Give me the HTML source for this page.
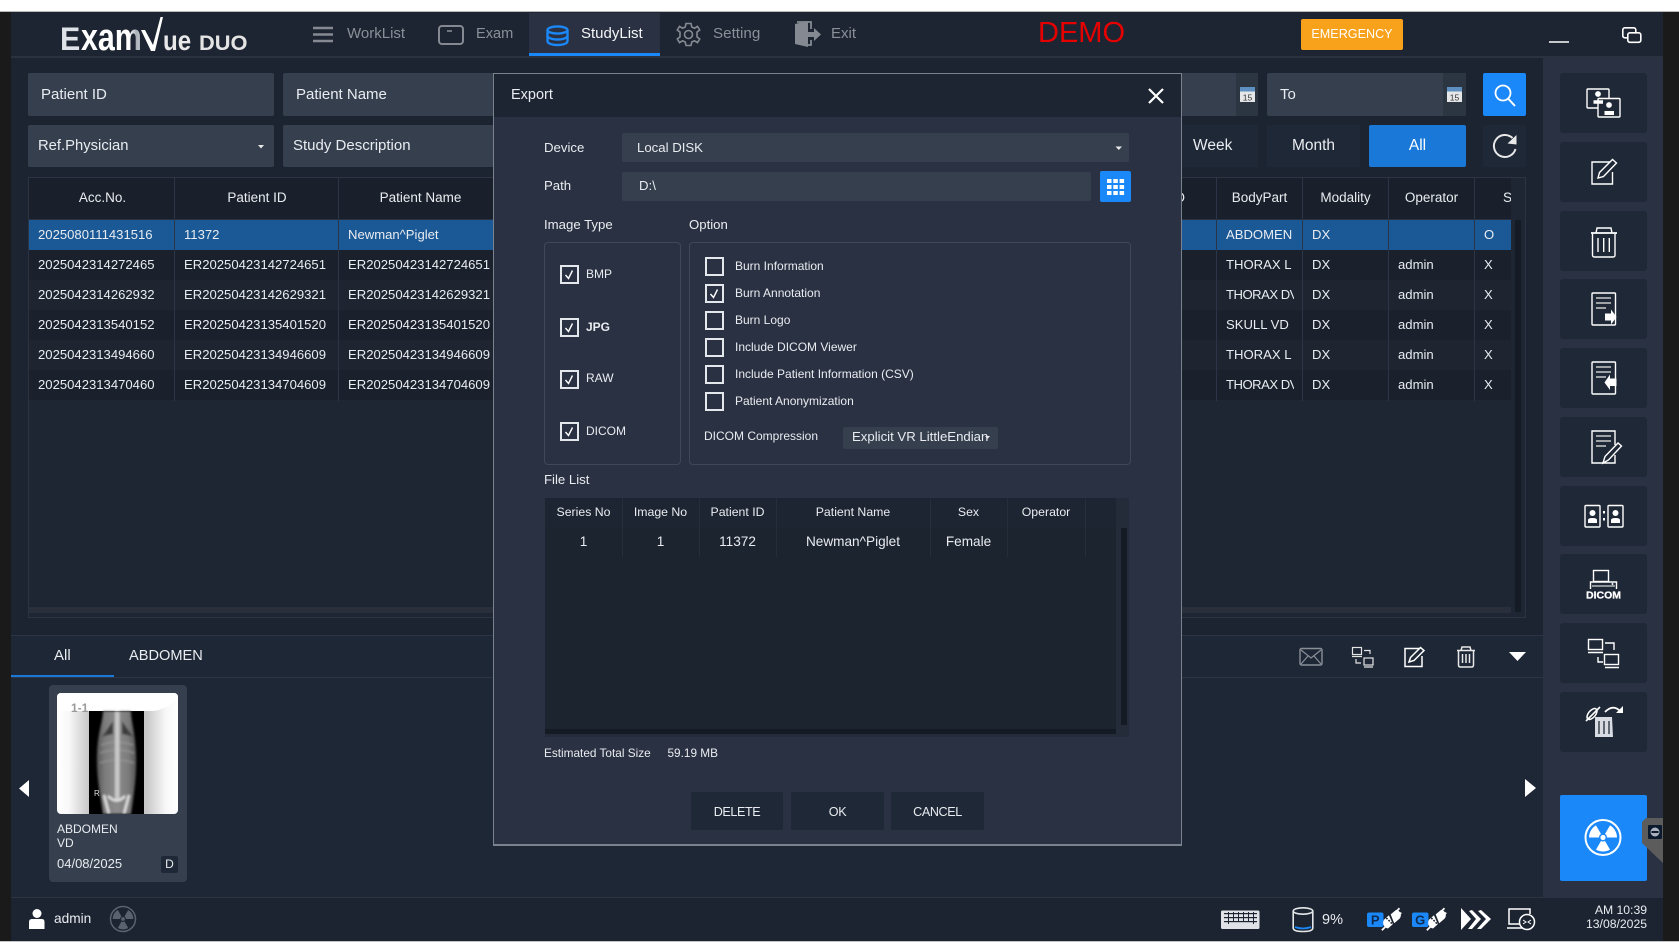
<!DOCTYPE html>
<html><head><meta charset="utf-8"><title>ExamVue DUO</title>
<style>
*{box-sizing:border-box}
html,body{margin:0;padding:0;width:1679px;height:942px;overflow:hidden;background:#fff;font-family:"Liberation Sans",sans-serif;color:#e9ecf0}
.a,.t,.r{position:absolute}
.t{white-space:nowrap;line-height:20px}
.c{text-align:center}
.f{background:#353f4e;border-radius:2px}
.sb{position:absolute;left:1560px;width:87px;height:60px;background:#1f2836;border-radius:3px}
.r{left:29px;width:1482px;height:30px;line-height:30px;font-size:13.1px;background:#1a202c}
.r.l{background:#1e2531}
.r.s{background:#1a5896;line-height:29px}
.r span{position:absolute;white-space:nowrap;top:0}
.c1{left:9px}.c2{left:155px}.c3{left:319px}.c4{left:1197px;width:68px;overflow:hidden}.c5{left:1283px}.c6{left:1369px}.c7{left:1455px}
.n{letter-spacing:-.5px}
.hd{font-size:13.5px;top:188px}
.vl{position:absolute;width:1px;background:#2c3546;top:177px;height:224px}
.dl{font-size:13.2px}
.op{font-size:12px}
.cb{position:absolute;width:19px;height:19px;border:2px solid #e4e7ec;background:transparent}
.ft{position:absolute;top:498px;height:30px;line-height:29px;font-size:12.3px;text-align:center}
.fr{position:absolute;top:528px;height:29px;line-height:28px;font-size:13.6px;text-align:center}
.fv{position:absolute;top:498px;height:59px;width:1px;background:#262e3b}
.btn{position:absolute;top:792px;height:38px;background:#1f2836;border-radius:2px;line-height:40px;text-align:center;font-size:12.6px;letter-spacing:-.4px}
</style></head>
<body>
<!-- frame -->
<div class="a" style="left:0;top:11px;width:1679px;height:1px;background:#b8b8b8"></div>
<div class="a" style="left:0;top:12px;width:1679px;height:929px;background:#1a1a1a"></div>
<div class="a" style="left:0;top:941px;width:1679px;height:1px;background:#c4c4c4"></div>
<div class="a" style="left:11px;top:12px;width:1652px;height:929px;background:#1c2431"></div>
<!-- header -->
<div class="a" style="left:11px;top:12px;width:1652px;height:44px;background:#1d2532"></div>
<div class="a" style="left:11px;top:56px;width:1652px;height:1.5px;background:#2a3240"></div>
<div class="a" style="left:529px;top:13px;width:131px;height:42px;background:#2a3142"></div>
<div class="a" style="left:529px;top:53px;width:131px;height:3px;background:#1a88f8"></div>
<div class="t" style="left:347px;top:24px;font-size:15px;color:#8b9098">WorkList</div>
<div class="t" style="left:476px;top:24px;font-size:14.6px;color:#8b9098">Exam</div>
<div class="t" style="left:581px;top:24px;font-size:15px;color:#f4f5f7">StudyList</div>
<div class="t" style="left:713px;top:24px;font-size:15.2px;color:#8b9098">Setting</div>
<div class="t" style="left:831px;top:24px;font-size:15px;color:#8b9098">Exit</div>
<div class="t" style="left:1038px;top:22px;font-size:29px;line-height:22px;color:#e60000">DEMO</div>
<div class="a c" style="left:1301px;top:19px;width:102px;height:31px;background:#f8a11a;border-radius:2px;line-height:30px;font-size:12.6px;color:#fff">EMERGENCY</div>
<!-- sidebar -->
<div class="a" style="left:1543px;top:58px;width:120px;height:840px;background:#2a3142"></div>
<div class="sb" style="top:73px"></div><div class="sb" style="top:142px"></div><div class="sb" style="top:211px"></div><div class="sb" style="top:279px"></div><div class="sb" style="top:348px"></div><div class="sb" style="top:417px"></div><div class="sb" style="top:486px"></div><div class="sb" style="top:554px"></div><div class="sb" style="top:623px"></div><div class="sb" style="top:692px"></div>
<div class="a" style="left:1560px;top:795px;width:87px;height:86px;background:#1a88f8;border-radius:2px"></div>
<!-- filters -->
<div class="a f" style="left:28px;top:73px;width:246px;height:43px"></div>
<div class="t" style="left:41px;top:85px;font-size:15px">Patient ID</div>
<div class="a f" style="left:283px;top:73px;width:215px;height:43px"></div>
<div class="t" style="left:296px;top:85px;font-size:15px">Patient Name</div>
<div class="a f" style="left:28px;top:125px;width:246px;height:42px"></div>
<div class="t" style="left:38px;top:136px;font-size:14.8px">Ref.Physician</div>
<div class="a f" style="left:283px;top:125px;width:215px;height:42px"></div>
<div class="t" style="left:293px;top:136px;font-size:15px">Study Description</div>
<div class="a f" style="left:1180px;top:73px;width:78px;height:43px"></div>
<div class="a" style="left:1236px;top:73px;width:22px;height:43px;background:#2c3542"></div>
<div class="a f" style="left:1267px;top:73px;width:199px;height:43px"></div>
<div class="a" style="left:1443px;top:73px;width:23px;height:43px;background:#2c3542"></div>
<div class="t" style="left:1280px;top:85px;font-size:15px">To</div>
<div class="a" style="left:1483px;top:73px;width:43px;height:43px;background:#1a88f8;border-radius:2px"></div>
<div class="a c" style="left:1170px;top:125px;width:88px;height:42px;background:#1f2836;line-height:42px;font-size:15.5px"><span style="position:absolute;left:23px;top:0">Week</span></div>
<div class="a c" style="left:1267px;top:125px;width:93px;height:42px;background:#1f2836;line-height:42px;font-size:15.5px">Month</div>
<div class="a c" style="left:1369px;top:125px;width:97px;height:42px;background:#1a78d8;border-radius:2px;line-height:42px;font-size:15.5px;color:#fff">All</div>
<div class="a" style="left:1483px;top:125px;width:43px;height:42px;background:#1f2836;border-radius:2px"></div>
<!-- main table -->
<div class="a" style="left:28px;top:177px;width:1498px;height:441px;border:1px solid #2c3444;background:#1e2634"></div>
<div class="a" style="left:29px;top:178px;width:1482px;height:41px;background:#1a202b"></div>
<div class="t hd" style="left:29px;width:147px;text-align:center">Acc.No.</div>
<div class="t hd" style="left:175px;width:164px;text-align:center">Patient ID</div>
<div class="t hd" style="left:339px;width:163px;text-align:center">Patient Name</div>
<div class="t hd" style="left:1120px;width:65px;text-align:right">Study ID</div>
<div class="t hd" style="left:1216px;width:87px;text-align:center">BodyPart</div>
<div class="t hd" style="left:1302px;width:87px;text-align:center">Modality</div>
<div class="t hd" style="left:1388px;width:87px;text-align:center">Operator</div>
<div class="t hd" style="left:1503px;width:8px;overflow:hidden;text-align:left">S</div>
<div class="r s" style="top:220px"><span class="c1">2025080111431516</span><span class="c2">11372</span><span class="c3">Newman^Piglet</span><span class="c4">ABDOMEN</span><span class="c5">DX</span><span class="c7">O</span></div>
<div class="r" style="top:250px"><span class="c1">2025042314272465</span><span class="c2">ER20250423142724651</span><span class="c3">ER20250423142724651</span><span class="c4">THORAX L</span><span class="c5">DX</span><span class="c6">admin</span><span class="c7">X</span></div>
<div class="r l" style="top:280px"><span class="c1">2025042314262932</span><span class="c2">ER20250423142629321</span><span class="c3">ER20250423142629321</span><span class="c4 n">THORAX DV</span><span class="c5">DX</span><span class="c6">admin</span><span class="c7">X</span></div>
<div class="r" style="top:310px"><span class="c1">2025042313540152</span><span class="c2">ER20250423135401520</span><span class="c3">ER20250423135401520</span><span class="c4">SKULL VD</span><span class="c5">DX</span><span class="c6">admin</span><span class="c7">X</span></div>
<div class="r l" style="top:340px"><span class="c1">2025042313494660</span><span class="c2">ER20250423134946609</span><span class="c3">ER20250423134946609</span><span class="c4">THORAX L</span><span class="c5">DX</span><span class="c6">admin</span><span class="c7">X</span></div>
<div class="r" style="top:370px"><span class="c1">2025042313470460</span><span class="c2">ER20250423134704609</span><span class="c3">ER20250423134704609</span><span class="c4 n">THORAX DV</span><span class="c5">DX</span><span class="c6">admin</span><span class="c7">X</span></div>
<div class="vl" style="left:174px"></div><div class="vl" style="left:338px"></div><div class="vl" style="left:1216px"></div><div class="vl" style="left:1302px"></div><div class="vl" style="left:1388px"></div><div class="vl" style="left:1474px"></div>
<div class="a" style="left:1515px;top:220px;width:6px;height:392px;background:#151b24"></div>
<div class="a" style="left:29px;top:607px;width:1482px;height:6px;background:#2a303b"></div>
<div class="a" style="left:29px;top:219px;width:1482px;height:1px;background:#2a3344"></div>
<!-- bottom panel -->
<div class="a" style="left:11px;top:635px;width:1532px;height:263px;background:#1e2736"></div>
<div class="a" style="left:11px;top:635px;width:1532px;height:1px;background:#2d3544"></div>
<div class="a" style="left:11px;top:677px;width:1532px;height:1px;background:#2d3544"></div>
<div class="a" style="left:11px;top:675px;width:103px;height:2px;background:#1a78d8"></div>
<div class="t" style="left:54px;top:646px;font-size:15px">All</div>
<div class="t" style="left:129px;top:646px;font-size:14.6px">ABDOMEN</div>
<!-- thumbnail -->
<div class="a" style="left:49px;top:685px;width:138px;height:197px;background:#353f4e;border-radius:4px"></div>
<svg class="a" style="left:57px;top:693px;border-radius:4px" width="121" height="121" viewBox="0 0 121 121">
<defs><linearGradient id="g1" x1="0" x2="1"><stop offset="0" stop-color="#fff"/><stop offset=".1" stop-color="#f8f8f8"/><stop offset=".26" stop-color="#c8c8c8"/><stop offset=".74" stop-color="#c8c8c8"/><stop offset=".9" stop-color="#f8f8f8"/><stop offset="1" stop-color="#fff"/></linearGradient>
<linearGradient id="g2" x1="0" x2="1"><stop offset="0" stop-color="#555"/><stop offset=".2" stop-color="#7c7c7c"/><stop offset=".5" stop-color="#8c8c8c"/><stop offset=".8" stop-color="#7c7c7c"/><stop offset="1" stop-color="#555"/></linearGradient>
<filter id="bl"><feGaussianBlur stdDeviation="1"/></filter></defs>
<rect width="121" height="121" fill="url(#g1)"/><path d="M0 0H121V6Q105 18 95 18H0Z" fill="#fff"/>
<rect x="32" y="18" width="55" height="103" fill="#000"/>
<g filter="url(#bl)"><path d="M46 18C46 28 41 38 40 60C39 82 43 100 46 121H74C77 100 80 82 79 60C78 38 74 28 74 18Z" fill="url(#g2)"/>
<path d="M45 44L56 28V41Q50 42 45 44ZM76 44L65 28V41Q71 42 76 44Z" fill="#3c3c3c"/>
<path d="M44 52Q60 46 76 52M43 60Q60 54 77 60M43 70Q60 64 77 70" stroke="#9c9c9c" stroke-width="1" fill="none"/>
<rect x="58" y="18" width="4.500" height="90" fill="#c8c8c8"/>
<path d="M47 102L52 121M72 102L67 121M51 103Q60 112 68 103" stroke="#dedede" stroke-width="2.600" fill="none"/></g>
<text x="37" y="103" font-size="8" fill="#ddd" font-family="Liberation Sans">R</text>
<text x="14" y="19" font-size="12" fill="#9a9a9a" font-family="Liberation Sans" font-weight="bold">1-1</text>
</svg>
<div class="t" style="left:57px;top:819px;font-size:12px">ABDOMEN</div>
<div class="t" style="left:57px;top:833px;font-size:12px">VD</div>
<div class="t" style="left:57px;top:854px;font-size:13px">04/08/2025</div>
<div class="a c" style="left:161px;top:856px;width:17px;height:17px;background:#1f2836;border-radius:2px;font-size:12px;line-height:16px">D</div>
<!-- status bar -->
<div class="a" style="left:11px;top:897px;width:1532px;height:1px;background:#2d3544"></div>
<div class="a" style="left:11px;top:898px;width:1652px;height:43px;background:#1c2431"></div>
<div class="t" style="left:54px;top:909px;font-size:13.7px">admin</div>
<div class="t" style="left:1322px;top:910px;font-size:14.5px">9%</div>
<div class="t" style="left:1560px;top:903px;width:87px;text-align:right;font-size:12.2px;line-height:14px">AM 10:39<br>13/08/2025</div>

<!-- dialog -->
<div class="a" style="left:493px;top:73px;width:689px;height:773px;background:#2a3142;border:1px solid #7a828e;border-bottom-width:2px"></div>
<div class="a" style="left:494px;top:74px;width:687px;height:43px;background:#1d2533"></div>
<div class="t" style="left:511px;top:85px;font-size:14.5px">Export</div>
<div class="t dl" style="left:544px;top:138px">Device</div>
<div class="a f" style="left:622px;top:133px;width:507px;height:29px"></div>
<div class="t dl" style="left:637px;top:138px">Local DISK</div>
<div class="t dl" style="left:544px;top:176px">Path</div>
<div class="a f" style="left:622px;top:172px;width:469px;height:29px"></div>
<div class="t dl" style="left:639px;top:176px">D:\</div>
<div class="a" style="left:1100px;top:171px;width:31px;height:31px;background:#1a88f8;border-radius:2px"></div>
<div class="t dl" style="left:544px;top:215px">Image Type</div>
<div class="t dl" style="left:689px;top:215px">Option</div>
<div class="a" style="left:544px;top:242px;width:137px;height:223px;border:1px solid #3f4858;border-radius:4px"></div>
<div class="a" style="left:689px;top:242px;width:442px;height:223px;border:1px solid #3f4858;border-radius:4px"></div>
<div class="cb" style="left:560px;top:265px"></div><div class="t op" style="left:586px;top:264px">BMP</div>
<div class="cb" style="left:560px;top:318px"></div><div class="t op" style="left:586px;top:317px;font-weight:bold">JPG</div>
<div class="cb" style="left:560px;top:370px"></div><div class="t op" style="left:586px;top:368px">RAW</div>
<div class="cb" style="left:560px;top:422px"></div><div class="t op" style="left:586px;top:421px">DICOM</div>
<div class="cb" style="left:705px;top:257px"></div><div class="t op" style="left:735px;top:256px">Burn Information</div>
<div class="cb" style="left:705px;top:284px"></div><div class="t op" style="left:735px;top:283px">Burn Annotation</div>
<div class="cb" style="left:705px;top:311px"></div><div class="t op" style="left:735px;top:310px">Burn Logo</div>
<div class="cb" style="left:705px;top:338px"></div><div class="t op" style="left:735px;top:337px">Include DICOM Viewer</div>
<div class="cb" style="left:705px;top:365px"></div><div class="t op" style="left:735px;top:364px">Include Patient Information (CSV)</div>
<div class="cb" style="left:705px;top:392px"></div><div class="t op" style="left:735px;top:391px">Patient Anonymization</div>
<div class="t op" style="left:704px;top:426px">DICOM Compression</div>
<div class="a f" style="left:843px;top:427px;width:155px;height:22px"></div>
<div class="t" style="left:852px;top:427px;font-size:13.2px;width:139px;overflow:hidden">Explicit VR LittleEndian</div>
<div class="t dl" style="left:544px;top:470px">File List</div>
<!-- file table -->
<div class="a" style="left:545px;top:498px;width:584px;height:239px;background:#242b39"></div>
<div class="a" style="left:545px;top:528px;width:571px;height:201px;background:#1c2430"></div>
<div class="a" style="left:545px;top:498px;width:571px;height:30px;background:#1d2532"></div>
<div class="ft" style="left:545px;width:77px">Series No</div>
<div class="ft" style="left:622px;width:77px">Image No</div>
<div class="ft" style="left:699px;width:77px">Patient ID</div>
<div class="ft" style="left:776px;width:154px">Patient Name</div>
<div class="ft" style="left:930px;width:77px">Sex</div>
<div class="ft" style="left:1007px;width:78px">Operator</div>
<div class="fr" style="left:545px;width:77px">1</div>
<div class="fr" style="left:622px;width:77px">1</div>
<div class="fr" style="left:699px;width:77px">11372</div>
<div class="fr" style="left:776px;width:154px">Newman^Piglet</div>
<div class="fr" style="left:930px;width:77px">Female</div>
<div class="fv" style="left:622px"></div><div class="fv" style="left:699px"></div><div class="fv" style="left:776px"></div><div class="fv" style="left:930px"></div><div class="fv" style="left:1007px"></div><div class="fv" style="left:1085px"></div>
<div class="a" style="left:1121px;top:528px;width:6px;height:197px;background:#151b24"></div>
<div class="a" style="left:545px;top:729px;width:571px;height:5px;background:#151b24"></div>
<div class="t" style="left:544px;top:743px;font-size:11.8px">Estimated Total Size</div>
<div class="t" style="left:667.500px;top:743px;font-size:11.8px">59.19 MB</div>
<div class="btn" style="left:691px;width:92px">DELETE</div>
<div class="btn" style="left:791px;width:93px">OK</div>
<div class="btn" style="left:891px;width:93px">CANCEL</div>

<!-- icon overlay -->
<svg class="a" style="left:0;top:0" width="1679" height="942" viewBox="0 0 1679 942" font-family="Liberation Sans">
<defs>
<g id="rad"><path d="M-7 12.12A14 14 0 0 0 7 12.12L2 3.46A4 4 0 0 1 -2 3.46Z"/><path transform="rotate(120)" d="M-7 12.12A14 14 0 0 0 7 12.12L2 3.46A4 4 0 0 1 -2 3.46Z"/><path transform="rotate(240)" d="M-7 12.12A14 14 0 0 0 7 12.12L2 3.46A4 4 0 0 1 -2 3.46Z"/><circle r="2.6"/></g>
<linearGradient id="lg" gradientUnits="userSpaceOnUse" x1="60" x2="140" y1="0" y2="0"><stop offset="0" stop-color="#fff"/><stop offset=".12" stop-color="#aab0b8"/><stop offset=".3" stop-color="#fff"/><stop offset="1" stop-color="#f0f0f0"/></linearGradient>
<g id="plug" fill="#fff"><path d="M1 23L5 19" stroke="#fff" stroke-width="2"/><path d="M8 22A6.500 6.500 0 0 1 3.500 12L9 7 13.500 17Z" transform="translate(0 -1)"/><path d="M11 6L17 1A6 6 0 0 1 21 11L15 16Z" transform="translate(0 -1)"/><path d="M17 2L21 -2M20 6L23 3" stroke="#fff" stroke-width="2"/><path d="M6 9L17 20" stroke="#1c2431" stroke-width="1.800" stroke-dasharray="2 1.500"/></g>
</defs>
<!-- logo -->
<text transform="translate(60 50) scale(.95 1)" font-size="32" font-weight="bold" fill="#dfe2e6">E</text>
<text transform="translate(81 50) scale(.8 1)" font-size="38" font-weight="bold" fill="url(#lg)">xam</text>
<path d="M141 30L151 51H155L163 17H160.500L153 45L145 30Z" fill="#fff"/>
<text transform="translate(163 50) scale(.86 1)" font-size="28" font-weight="bold" fill="#e8e8e8">ue</text>
<text transform="translate(199 50) scale(1.04 1)" font-size="21" font-weight="bold" fill="#e4e4e4">DUO</text>
<!-- nav icons -->
<g stroke="#858a92" stroke-width="2.4" fill="none"><path d="M313 28H333M313 34.5H333M313 41H333"/></g>
<rect x="439" y="26" width="24" height="18" rx="3" fill="none" stroke="#858a92" stroke-width="2"/><path d="M447 31h5" stroke="#858a92" stroke-width="1.6"/>
<g fill="none" stroke="#1a88f8" stroke-width="2.4"><ellipse cx="557.5" cy="30" rx="10" ry="3.6"/><path d="M547.5 30V41C547.5 43.5 552 45 557.5 45S567.5 43.500 567.5 41V30M547.5 35.500C547.5 38 552 39.500 557.500 39.500S567.500 38 567.500 35.500"/></g>
<g transform="translate(688.500 34.500)" fill="none" stroke="#858a92"><circle r="4" stroke-width="1.600"/><path stroke-width="1.600" d="M-2.500 -11H2.500L3.300 -7.500 6 -6.300 9 -8.100 11.200 -4.500 8.500 -2.400V2.400L11.200 4.500 9 8.100 6 6.300 3.300 7.500 2.500 11H-2.500L-3.300 7.500 -6 6.300 -9 8.100 -11.200 4.500 -8.500 2.400V-2.400L-11.200 -4.500 -9 -8.100 -6 -6.300 -3.300 -7.500Z"/></g>
<path d="M795 24L808 21V47L795 44Z" fill="#858a92"/><path d="M797 22H811V29M811 40V45H806" fill="none" stroke="#858a92" stroke-width="1.800"/><path d="M808 32H814V28L821 34.500 814 41V37H808Z" fill="#858a92"/>
<!-- window controls -->
<path d="M1549 42H1569" stroke="#fff" stroke-width="1.500"/>
<rect x="1622.800" y="27.800" width="13" height="10" rx="2" fill="none" stroke="#fff" stroke-width="1.600"/><rect x="1627.800" y="32.800" width="13" height="9.500" rx="2" fill="#1d2532" stroke="#fff" stroke-width="1.600"/>
<!-- calendar -->
<g><rect x="1240" y="87" width="15" height="15" fill="#e4e6e8"/><rect x="1240" y="87" width="15" height="4.500" fill="#5d8fc0"/><text x="1247.500" y="100.500" font-size="8.500" fill="#333" text-anchor="middle">15</text></g>
<g><rect x="1447" y="87" width="15" height="15" fill="#e4e6e8"/><rect x="1447" y="87" width="15" height="4.500" fill="#5d8fc0"/><text x="1454.500" y="100.500" font-size="8.500" fill="#333" text-anchor="middle">15</text></g>
<!-- search -->
<circle cx="1503" cy="93" r="7.500" fill="none" stroke="#fff" stroke-width="1.800"/><path d="M1508.500 99L1515 106" stroke="#fff" stroke-width="2"/>
<!-- refresh -->
<path d="M1512.500 138A11 11 0 1 0 1515.500 149" fill="none" stroke="#e8e8e8" stroke-width="2"/><path d="M1507.500 143.500L1516.500 144.500V135Z" fill="#e8e8e8"/>
<!-- carets -->
<path d="M258 145h6l-3 3.500z" fill="#e8e8e8"/><path d="M1115.500 146.500h6.500l-3.200 3.500z" fill="#e8e8e8"/><path d="M985 436h5l-2.500 3z" fill="#e8e8e8"/>
<!-- close -->
<path d="M1149 89L1163 103M1163 89L1149 103" stroke="#fff" stroke-width="2.200"/>
<!-- grid button -->
<g fill="#fff"><rect x="1107" y="179" width="4.500" height="4"/><rect x="1113.300" y="179" width="4.500" height="4"/><rect x="1119.600" y="179" width="4.500" height="4"/><rect x="1107" y="185" width="4.500" height="4"/><rect x="1113.300" y="185" width="4.500" height="4"/><rect x="1119.600" y="185" width="4.500" height="4"/><rect x="1107" y="191" width="4.500" height="4"/><rect x="1113.300" y="191" width="4.500" height="4"/><rect x="1119.600" y="191" width="4.500" height="4"/></g>
<!-- checks -->
<g fill="none" stroke="#fff" stroke-width="1.400"><path d="M565.500 275L568.500 278.500L572.500 270.500M565.500 328L568.500 331.500L572.500 323.500M565.500 380L568.500 383.500L572.500 375.500M565.500 432L568.500 435.500L572.500 427.500M710.500 294L713.500 297.500L717.500 289.500"/></g>
<!-- sidebar icons -->
<g fill="none" stroke="#fff" stroke-width="1.400">
<rect x="1587" y="89" width="22" height="19" rx="1"/><rect x="1598" y="98.500" width="22" height="18.500" rx="1" fill="#1f2836"/>
<circle cx="1598" cy="94" r="2.200" fill="#fff"/><path d="M1593.500 102H1603" stroke-width="3.500"/>
<circle cx="1609" cy="105" r="2.200" fill="#fff"/><path d="M1604.500 113H1614" stroke-width="4"/>
<path d="M1610 162H1592V184H1612.500V172"/><path d="M1598 178L1599.500 172.500L1612.500 159.500 1616.500 163 1603.500 176.500Z"/>
<path d="M1591 233H1617"  stroke-width="1.800"/><path d="M1596 233L1597 228H1611L1612 233"/><path d="M1592.500 233V255Q1592.500 257 1594.500 257H1613Q1615 257 1615 255V233"/><path d="M1598 238V252M1603.700 238V252M1609.300 238V252"/>
<rect x="1592" y="293" width="23.500" height="32" rx="1"/><path d="M1596 298H1611M1596 303H1611M1596 308H1606" stroke="#ccc"/>
<rect x="1592" y="362" width="23.500" height="32" rx="1"/><path d="M1596 367H1611M1596 372H1611M1596 377H1606" stroke="#ccc"/>
<path d="M1615 445V431H1592V463H1615V455"/><path d="M1596 436H1611M1596 441H1611M1596 446H1606" stroke="#ccc"/><path d="M1603 463L1605 456.500 1618 443 1621.500 446 1608.500 460Z"/>
<rect x="1585" y="505.500" width="15" height="21.500" rx="1"/><rect x="1608" y="505.500" width="15" height="21.500" rx="1"/>
<rect x="1593.500" y="570.500" width="15" height="11"/><path d="M1590.500 589V582H1616.500V589"/><path d="M1592 586H1615" stroke-width="1"/>
<rect x="1588.500" y="639.500" width="14" height="10"/><path d="M1588 652.500H1603M1605 667.500H1619"/><rect x="1604.500" y="654.500" width="14" height="10"/>
<path d="M1605 643H1614V650M1598 657V662H1603"/>
</g>
<g fill="#fff">
<path d="M1605 313.500H1611V309.500L1616.500 317 1611 324.500V320.500H1605Z"/>
<path d="M1616.500 378.500H1610V374.500L1604.500 382.500 1610 390V386H1616.500Z"/>
<circle cx="1592.500" cy="513" r="3"/><path d="M1588 523V520Q1588 518 1592.500 518T1597 520V523Z"/>
<circle cx="1615.500" cy="513" r="3"/><path d="M1611 523V520Q1611 518 1615.500 518T1620 520V523Z"/>
<rect x="1603" y="511" width="2" height="2.500"/><rect x="1603" y="518" width="2" height="2.500"/>
<circle cx="1612.500" cy="584" r="1"/>
<text x="1603.500" y="598.500" font-size="10.500" font-weight="bold" text-anchor="middle" stroke="#fff" stroke-width=".3">DICOM</text>
</g>
<path d="M1595 717H1612L1613 737H1595Z" fill="#d8dce2"/><path d="M1599 721V734M1604 721V734M1609 721V734" stroke="#39414f" stroke-width="1.500"/>
<path d="M1605 712Q1613 704 1620 711" fill="none" stroke="#fff" stroke-width="1.800"/><path d="M1616 713H1623V706Z" fill="#fff"/>
<path d="M1586 721L1600 707" stroke="#fff" stroke-width="1.600"/><ellipse cx="1592" cy="714" rx="3.500" ry="6.500" transform="rotate(40 1592 714)" fill="none" stroke="#fff" stroke-width="1.500"/>
<!-- radiation button -->
<circle cx="1603" cy="837.500" r="17.500" fill="none" stroke="#fff" stroke-width="2"/><use href="#rad" transform="translate(1603 837.500)" fill="#fff"/>
<!-- teamviewer tab -->
<path d="M1663 818H1646L1642 822V843L1663 863Z" fill="#5c5c5c"/><rect x="1648" y="825" width="14" height="14" rx="1" fill="#0c1a30"/><circle cx="1655" cy="832" r="4.500" fill="#aab2bd"/><rect x="1651.500" y="831" width="7" height="2" fill="#0c1a30"/>
<!-- arrows -->
<path d="M29 780V797L19 788.500Z" fill="#fff"/><path d="M1525 779V797L1536 788Z" fill="#fff"/>
<!-- bottom toolbar -->
<rect x="1300" y="648.500" width="22" height="16.500" rx="1.500" fill="none" stroke="#8a8f97" stroke-width="1.400"/><path d="M1301 650L1311 658 1321 650M1301 664L1308 656M1321 664L1314 656" fill="none" stroke="#8a8f97" stroke-width="1.200"/>
<g fill="none" stroke="#e4e4e4" stroke-width="1.200"><rect x="1352.500" y="647.500" width="9" height="7"/><path d="M1352 656.500H1362M1364 667H1373"/><rect x="1364" y="658" width="9" height="7"/><path d="M1364 650.500H1370V654M1356 659V663H1361"/></g>
<g fill="none" stroke="#fff" stroke-width="1.500"><path d="M1420 648.500H1405V666.500H1422V656"/><path d="M1409 662L1410.500 657.500 1420.500 647.500 1424 650.500 1414 660.500Z"/></g>
<g fill="none" stroke="#e8e8e8" stroke-width="1.500"><path d="M1457 650.500H1475M1461 650.500L1462 647H1470L1471 650.500"/><path d="M1458.500 650.500V665Q1458.500 667 1460.500 667H1471.500Q1473.500 667 1473.500 665V650.500"/><path d="M1462.500 654V663M1466 654V663M1469.500 654V663"/></g>
<path d="M1509 652H1526L1517.500 661Z" fill="#fff"/>
<!-- status icons -->
<circle cx="37" cy="913.500" r="4.500" fill="#fff"/><path d="M29 929V922Q29 919 32 919H42Q44.500 919 44.500 922V929Z" fill="#fff"/>
<circle cx="123" cy="919" r="12.500" fill="none" stroke="#5a626e" stroke-width="1.500"/><use href="#rad" transform="translate(123 919) scale(.74)" fill="#5a626e"/>
<rect x="1221" y="910.500" width="38.500" height="18.500" rx="1.500" fill="#dfe2e6"/>
<g fill="#1c2431"><rect x="1224" y="913" width="33" height="1.200"/><rect x="1224" y="917" width="33" height="1.200"/><rect x="1224" y="921" width="33" height="1.200"/></g><g stroke="#1c2431" stroke-width="1"><path d="M1228.500 912V924M1233.500 912V922M1238.500 912V922M1243.500 912V922M1248.500 912V922M1253.500 912V924"/></g><rect x="1230" y="923" width="21" height="3.500" fill="#dfe2e6"/>
<g fill="none" stroke="#e4e6e8" stroke-width="1.600"><ellipse cx="1303" cy="911" rx="9.800" ry="3.200"/><path d="M1293.200 911V928Q1293.200 931.500 1303 931.500T1312.800 928V911"/></g><path d="M1295 927Q1303 930 1311 927" fill="none" stroke="#1a88f8" stroke-width="1.800"/>
<rect x="1367" y="912.500" width="16.500" height="14.500" rx="2" fill="#1a88f8"/><text x="1375.200" y="924.500" font-size="13" font-weight="bold" fill="#0e2a50" text-anchor="middle">P</text>
<rect x="1412" y="912.500" width="16.500" height="14.500" rx="2" fill="#1a88f8"/><text x="1420.200" y="924.500" font-size="13" font-weight="bold" fill="#0e2a50" text-anchor="middle">G</text>
<use href="#plug" transform="translate(1381 910) scale(.88)"/><use href="#plug" transform="translate(1426 910) scale(.88)"/>
<g fill="#fff"><path d="M1461 908L1471 919 1461 930ZM1472 910L1481 919 1472 929 1468 929 1476 919 1469 911ZM1481 910L1491 919 1481 929 1477 929 1486 919 1478 911Z"/></g>
<g fill="none" stroke="#fff" stroke-width="1.500"><path d="M1524 909H1509V924H1521"/><path d="M1524 909H1530V914"/><path d="M1507 928H1524"/></g><circle cx="1527" cy="922" r="7.500" fill="#1c2431" stroke="#fff" stroke-width="1.500"/><path d="M1523 920L1526 922 1523 924M1531 920L1528 922 1531 924" fill="none" stroke="#fff" stroke-width="1"/>
</svg>
</body></html>
